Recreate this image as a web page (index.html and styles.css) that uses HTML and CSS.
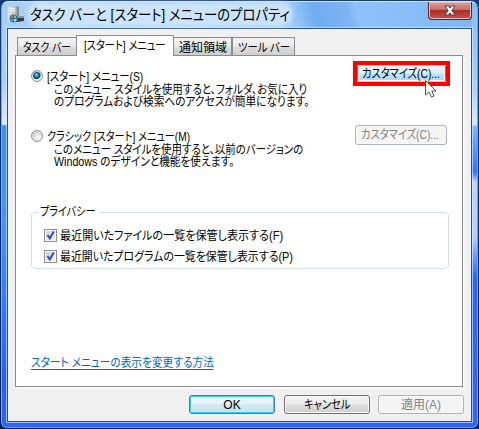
FILE: index.html
```html
<!DOCTYPE html>
<html lang="ja">
<head>
<meta charset="utf-8">
<title>タスク バーと [スタート] メニューのプロパティ</title>
<link rel="stylesheet" href="styles.css">
</head>
<body>
<div class="window">
  <header class="titlebar">
    <svg class="app-icon" width="16" height="17" viewBox="0 0 16 17">
      <defs><linearGradient id="g" x2="1"><stop offset="0" stop-color="#e0e3e5"/><stop offset=".6" stop-color="#c3c7ca"/><stop offset="1" stop-color="#7f858a"/></linearGradient></defs>
      <path d="M0 1L9 0L11 1V15H0Z" fill="url(#g)"/>
      <path d="M2 2.5H7M2 4.5H7" stroke="#f4f6f7"/>
      <path d="M9 0L11 1V12H9Z" fill="#858a91"/>
      <path d="M7 11H16V15L8 16Z" fill="#343b44"/><path d="M9 10H16V12H9Z" fill="#8e969c"/>
      <circle cx="5.5" cy="12.5" r="4" fill="#1e72b5"/>
      <path d="M3 10L5 9V12H2Z" fill="#e35c2a"/><path d="M6 9L8 10V12H6Z" fill="#8fc63f"/><path d="M2 13H5V16L3 15Z" fill="#42a5e8"/><path d="M6 13H9L8 15L6 16Z" fill="#f3cf3a"/>
    </svg>
    <h1 class="title"><span class="fit w89">タスク バーと [スタート] メニューのプロパティ</span></h1>
    <button class="close" aria-label="閉じる">
      <svg width="12" height="11" viewBox="0 0 12 11"><path d="M1 1H4.4L6 3.2L7.6 1H11L7.8 5.5L11 10H7.6L6 7.8L4.4 10H1L4.2 5.5Z" fill="#fff" stroke="#494b59"/></svg>
    </button>
  </header>
  <main class="client">
    <nav class="tabs">
      <div class="tab tab-taskbar"><span class="fit w82">タスク バー</span></div>
      <div class="tab tab-start selected"><span class="fit w85">[スタート] メニュー</span></div>
      <div class="tab tab-notify"><span class="fit">通知領域</span></div>
      <div class="tab tab-tool"><span class="fit w86">ツール バー</span></div>
    </nav>
    <section class="panel">
      <div class="option">
        <i class="radio checked"></i>
        <div class="option-text">
          <p><span class="fit w86">[スタート] メニュー(S)</span></p>
          <p class="desc"><span class="fit w877">このメニュー スタイルを使用すると、フォルダ、お気に入り</span></p>
          <p class="desc"><span class="fit w89">のプログラムおよび検索へのアクセスが簡単になります。</span></p>
        </div>
        <div class="highlight"><button class="btn hot"><span class="fit w855">カスタマイズ(C)...</span></button>
          <svg class="cursor" width="14" height="20" viewBox="0 0 14 20"><path d="M1.5 1.5V16L5 13L7.5 18L10 17L7.8 12H12Z" fill="#fff" stroke="#4a4a60"/></svg>
        </div>
      </div>
      <div class="option classic">
        <i class="radio"></i>
        <div class="option-text">
          <p><span class="fit w844">クラシック [スタート] メニュー(M)</span></p>
          <p class="desc"><span class="fit w87">このメニュー スタイルを使用すると、以前のバージョンの</span></p>
          <p class="desc"><span class="fit w89">Windows のデザインと機能を使えます。</span></p>
        </div>
        <button class="btn disabled classic-btn"><span class="fit w855">カスタマイズ(C)...</span></button>
      </div>
      <fieldset class="privacy">
        <legend><span class="fit w84">プライバシー</span></legend>
        <div class="check"><i class="box"><svg width="11" height="11" viewBox="0 0 11 11"><path d="M2.5 5L4.8 8.3L8.8 1.5" fill="none" stroke="#3450a0" stroke-width="2"/></svg></i><span class="fit w92">最近開いたファイルの一覧を保管し表示する(F)</span></div>
        <div class="check"><i class="box"><svg width="11" height="11" viewBox="0 0 11 11"><path d="M2.5 5L4.8 8.3L8.8 1.5" fill="none" stroke="#3450a0" stroke-width="2"/></svg></i><span class="fit w91">最近開いたプログラムの一覧を保管し表示する(P)</span></div>
      </fieldset>
      <a class="help"><span class="fit w89">スタート メニューの表示を変更する方法</span></a>
    </section>
    <footer class="actions">
      <button class="btn default">OK</button>
      <button class="btn"><span class="fit w85 mid">キャンセル</span></button>
      <button class="btn disabled apply">適用(A)</button>
    </footer>
  </main>
</div>
</body>
</html>
```
FILE: styles.css
```css
* { box-sizing: border-box; }
body {
  margin: 0; padding: 1px; height: 429px; overflow: hidden;
  background: linear-gradient(#173a70, #0a1c50);
  font: 12px/12px "Liberation Sans", "Noto Sans CJK JP", sans-serif;
  font-feature-settings: "palt";
  color: #000;
}
p, h1 { margin: 0; font-weight: normal; }
.window {
  width: 477px; height: 427px; padding: 0 5px;
  border: 1px solid; border-color: #c9e9fc #10cdfb #28bdfc #54b9fb;
  border-radius: 7px 7px 6px 6px;
  background:
    linear-gradient(#8abdf5 0, #a2cdfa 75px, #d9e9fc 123px, #83b5fd 124px, #3172ff 170px, #bfd4ff 180px, #b5ceff 235px, #4a87ff 263px, #236bee 275px, #3065f5 100%) right / 5px 100% no-repeat,
    linear-gradient(#a2cdfa 0, #a7cffa 75px, #dcebfa 122px, #3b8ff6 124px, #4495ff 220px, #287cfb 310px, #2460ef 380px, #2d65f5 100%) left / 5px 100% no-repeat,
    linear-gradient(#8ec2fa, #8ec2fa) top / 100% 27px no-repeat,
    #2d65f5;
}
.titlebar {
  display: flex; align-items: flex-start; height: 26px;
  background: linear-gradient(75deg, #a9d0fa 0, #9cc9f8 61%, #70acf1 66%, #7db3f3 73%, #8ec2fa 75%, #80b7f6 100%);
}
.app-icon { margin: 4px 0 0 1px; }
.title {
  width: 274px; margin: 3px 0 0 5px; padding: 0 0 0 1px;
  font-size: 15px; line-height: 19px;
}
.title .fit {
  border-radius: 9px; background: rgba(226,239,253,.65);
  box-shadow: 0 0 5px 3px rgba(226,239,253,.65);
}
.close {
  display: flex; align-items: center; justify-content: center;
  width: 44px; height: 18px; margin-left: auto; padding: 0 0 1px;
  border: 1px solid #59252c; border-top: 0; border-radius: 0 0 4px 4px;
  background: linear-gradient(#d6a19c 0, #c56e66 45%, #a92d23 50%, #c3564c 100%);
  box-shadow: inset 0 0 0 1px #e8bcb7;
}
.client {
  height: 394px; border: 1px solid #2c4f7f; background: #f0f0f0;
  box-shadow: 0 0 0 1px rgba(220,238,255,.65);
}
.fit { display: inline-block; white-space: nowrap; transform-origin: 0 50%; }
.w82 { transform: scaleX(.82); }
.w84 { transform: scaleX(.84); }
.w844 { transform: scaleX(.844); }
.w85 { transform: scaleX(.85); }
.w855 { transform: scaleX(.855); }
.w86 { transform: scaleX(.86); }
.w87 { transform: scaleX(.871); }
.w877 { transform: scaleX(.877); }
.w89 { transform: scaleX(.89); }
.w91 { transform: scaleX(.91); }
.w92 { transform: scaleX(.922); }
.mid { transform-origin: 50% 50%; }

.tabs { display: flex; align-items: flex-end; height: 26px; padding-left: 9px; }
.tab {
  height: 18px; padding: 4px 0 0 5px;
  border: 1px solid #898c95; border-bottom: 0;
  background: linear-gradient(#f3f3f3 0, #ebebeb 48%, #dddddd 52%, #cfcfcf 100%);
}
.tab-taskbar { width: 59px; border-right: 0; }
.tab-start { width: 98px; padding-left: 7px; }
.tab-notify { width: 58px; border-left: 0; }
.tab-tool { width: 63px; }
.tab.selected { height: 21px; margin-bottom: -1px; z-index: 1; background: #fff; }

.panel {
  width: 448px; height: 332px; margin-left: 7px; padding: 9px 15px 0 15px;
  border: 1px solid #898c95; background: #fff;
  box-shadow: 2px 2px 0 #fafafa;
}
.option { display: flex; height: 60px; }
.radio {
  width: 12px; height: 12px; margin: 5px 4px 0 0; border-radius: 50%;
  border: 1px solid #8e8f8f;
  background: radial-gradient(circle at 65% 65%, #f2f2f2 20%, #c4c7ca 70%);
  box-shadow: inset 0 0 0 1px #eee;
}
.radio.checked { background: radial-gradient(circle at 45% 40%, #8fe4fb 0, #1b86bd 22%, #123c5f 45%, #dfe3e6 55%); }
.option-text { flex: 1; padding-top: 6px; }
.option-text p { height: 12px; white-space: nowrap; }
.option-text p:first-child { height: 13px; }
.option-text .desc { padding-left: 7px; width: 260px; }
.highlight {
  position: relative; width: 97px; height: 25px; margin: -4px -3px 0 0;
  border: 4px solid #f00;
}
.btn {
  width: 86px; height: 19px; padding: 0;
  border: 1px solid #707070; border-radius: 3px;
  background: linear-gradient(#f3f3f3 0, #ebebeb 48%, #dddddd 52%, #cfcfcf 100%);
  box-shadow: inset 0 0 0 1px #fafafa;
  color: #000; font: inherit; font-feature-settings: inherit;
}
.hot {
  display: block; width: 89px; height: 17px; padding-left: 4px; text-align: left;
  border-color: #b0d0e0 #54839c; border-radius: 2px;
  background: linear-gradient(#eaf6fd 0, #d9f0fc 48%, #bee6fd 52%, #a7d9f5 100%);
}
.cursor { position: absolute; left: 67px; top: 14px; }
.classic-btn { width: 92px; height: 20px; padding-left: 5px; text-align: left; }
.disabled { border-color: #adb2b5; background: #f4f4f4; color: #838383; }
.default {
  border-color: #3c7fb1;
  background: linear-gradient(#ecf6fb 0, #e2f1f8 48%, #cfe8f3 52%, #c4e2ef 100%);
  box-shadow: inset 0 0 0 1px #35cdf9;
}
.privacy {
  width: 418px; height: 63px; margin: 21px 0 0; padding: 11px 0 0 12px;
  border: 1px solid #d5dfe5; border-radius: 4px;
}
.privacy legend { width: 60px; height: 12px; margin-left: -5px; padding: 0 0 0 1px; }
.check { display: flex; align-items: center; gap: 3px; height: 13px; margin-bottom: 8px; }
.box {
  width: 13px; height: 13px; border: 1px solid #8e8f8f;
  background: linear-gradient(135deg, #cbcfd5, #f6f6f6);
  box-shadow: inset 0 0 0 1px #f4f4f4;
}
.box svg { display: block; }
.help { display: block; width: 185px; margin-top: 88px; color: #0066cc; }
.help .fit { height: 13px; border-bottom: 1px solid #0066cc; line-height: 13px; }
.actions { display: flex; gap: 9px; padding: 8px 0 0 181px; }
.apply { margin-left: -1px; }
```
